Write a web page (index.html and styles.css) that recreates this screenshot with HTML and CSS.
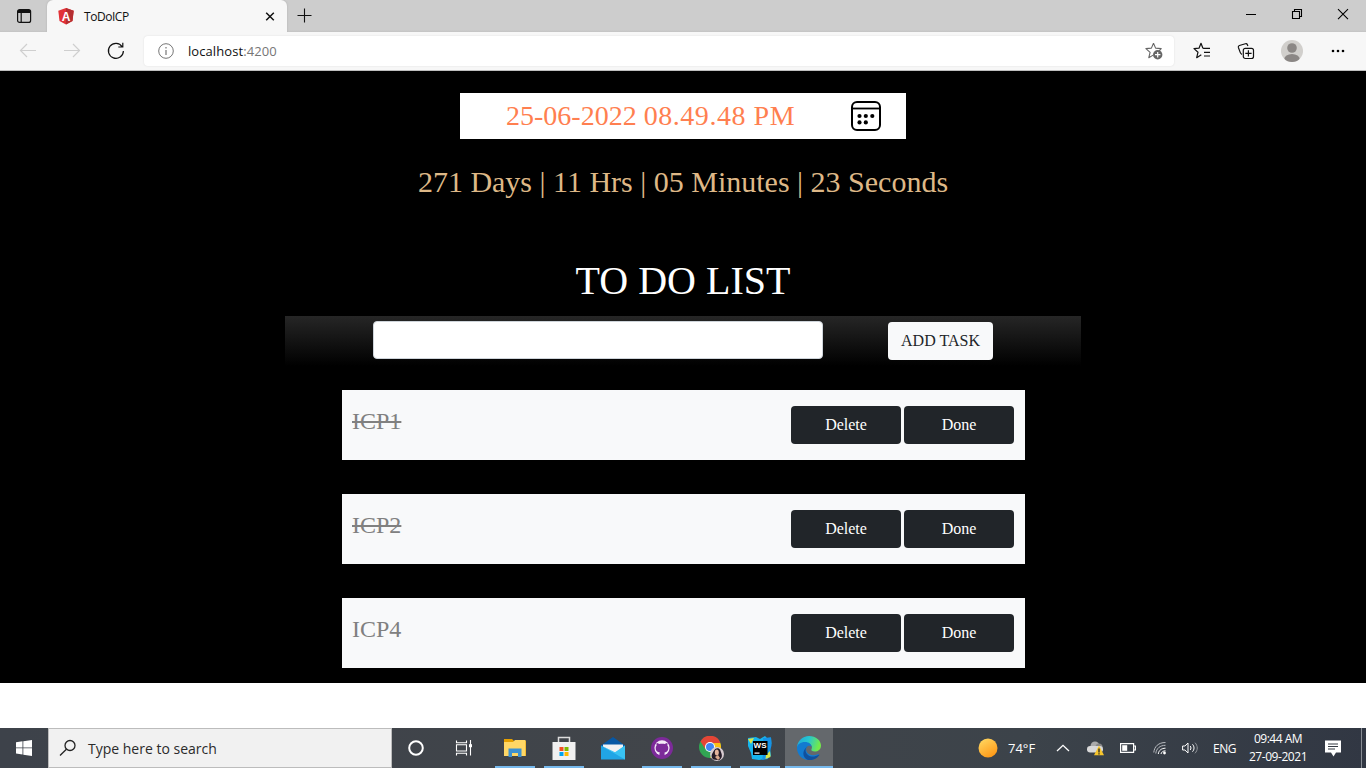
FILE: index.html
```html
<!DOCTYPE html>
<html lang="en">
<head>
<meta charset="utf-8">
<title>ToDoICP</title>
<link rel="stylesheet" href="styles.css">
</head>
<body>
<div class="screen">
  <header class="tabs">
    <div class="tab-menu">
      <svg width="16" height="16" viewBox="0 0 16 16" fill="none" stroke="#111" stroke-width="1.2"><rect x="1.6" y="1.6" width="13" height="12.8" rx="2"/><path d="M2 3.500h12.200" stroke-width="3"/><path d="M5.200 5v9"/></svg>
    </div>
    <div class="tab">
      <svg class="favicon" width="16" height="17" viewBox="0 0 16 17"><path d="M8 0l7.7 2.8-1.2 10.2L8 16.5 1.5 13 .3 2.8z" fill="#e23237"/><path d="M8 0l7.7 2.8-1.2 10.2L8 16.5z" fill="#b52e31"/><text x="8" y="12.5" text-anchor="middle" class="fav-letter">A</text></svg>
      <span class="tab-title">ToDoICP</span>
      <svg class="tab-close" width="10" height="10" viewBox="0 0 10 10" stroke="#111" stroke-width="1.5"><path d="M1.200 1.700l7.600 7.600M8.800 1.700L1.200 9.300"/></svg>
    </div>
    <svg class="new-tab" width="15" height="15" viewBox="0 0 15 15" stroke="#111" stroke-width="1.1"><path d="M7.5 .5v14M.5 7.5h14"/></svg>
    <div class="window-buttons">
      <svg width="46" height="28" viewBox="0 0 46 28" fill="none" stroke="#000"><path d="M18 14.5h10"/></svg>
      <svg width="46" height="28" viewBox="0 0 46 28" fill="none" stroke="#000" stroke-width="1.1"><path d="M18.5 11.5h7v7h-7zM20.5 11.5v-2h7v7h-2"/></svg>
      <svg width="46" height="28" viewBox="0 0 46 28" fill="none" stroke="#000" stroke-width="1.1"><path d="M18 9.200l10 10M28 9.200l-10 10"/></svg>
    </div>
  </header>
  <div class="toolbar">
    <svg class="nav" width="44" height="38" viewBox="0 0 44 38" fill="none" stroke="#cfcfcf" stroke-width="1.2"><path d="M36 18.500H20.500M27 12l-6.500 6.500 6.500 6.500"/></svg>
    <svg class="nav" width="44" height="38" viewBox="0 0 44 38" fill="none" stroke="#cfcfcf" stroke-width="1.2"><path d="M20 18.500h15.500M29 12l6.500 6.500-6.500 6.500"/></svg>
    <svg class="nav" width="56" height="38" viewBox="0 0 56 38" fill="none" stroke="#111" stroke-width="1.2"><path d="M34.200 14.800A7.500 7.500 0 1 0 35.400 19M34.800 10.700v4.300h-4.500"/></svg>
    <div class="address">
      <svg width="16" height="16" viewBox="0 0 16 16" fill="none" stroke="#767676"><circle cx="8" cy="8" r="7.300"/><path d="M8 7v5M8 4v1.400" stroke-width="1.200"/></svg>
      <span class="url">localhost<span class="port">:4200</span></span>
      <svg class="add-star" width="18" height="18" viewBox="0 0 18 18"><path d="M8.500 1.300l2.100 4.800 5.600.5-2 2.200M8.500 1.300L6.400 6.100.9 6.600l4.200 3.700-1.300 5.400 4.300-2.600" fill="none" stroke="#666" stroke-width="1.100" stroke-linejoin="round"/><circle cx="12.700" cy="12.700" r="4.700" fill="#666"/><path d="M12.700 10v5.400M10 12.700h5.400" stroke="#fff" stroke-width="1.200"/></svg>
    </div>
    <div class="actions">
      <svg width="18" height="18" viewBox="0 0 18 18" fill="none" stroke="#111" stroke-width="1.200" stroke-linejoin="round"><path d="M10.800 6.300L9.800 6 8 1.300 6 6.200 1 6.600l4 3.600-1.300 5.500 4.600-3M10 6.300h7M11 10.300h6M11 14h6"/></svg>
      <svg width="18" height="18" viewBox="0 0 18 18" fill="none" stroke="#111" stroke-width="1.200" stroke-linejoin="round"><rect x="6.300" y="6.300" width="10.200" height="10.200" rx="2"/><path d="M11.400 8.300v6.300M8.300 11.400h6.300M5 12.400c-1-.5-1.500-1-1.800-2L1.400 5.500c-.3-1 .1-1.700 1-2l6-1.800c1-.3 1.600 0 2 1l.5 1.300"/></svg>
      <svg width="22" height="22" viewBox="0 0 22 22"><clipPath id="avatar"><circle cx="11" cy="11" r="11"/></clipPath><g clip-path="url(#avatar)"><path fill="#d1cfcc" d="M0 0h22v22H0z"/><circle cx="11" cy="8" r="4.800" fill="#8b8785"/><ellipse cx="11" cy="19.500" rx="7.800" ry="5.500" fill="#8b8785"/></g></svg>
      <svg width="14" height="4" viewBox="0 0 14 4"><circle cx="2" cy="2" r="1.300"/><circle cx="7" cy="2" r="1.300"/><circle cx="12" cy="2" r="1.300"/></svg>
    </div>
  </div>
  <main class="page">
    <div class="date-field">
      <span class="date-text">25-06-2022 <span class="date-time">08.49.48 PM</span></span>
      <svg width="32" height="32" viewBox="0 0 32 32"><rect x="2" y="2" width="28" height="28" rx="5" fill="none" stroke="#000" stroke-width="2"/><path d="M2 8.500h28" stroke="#000" stroke-width="1.800"/><circle cx="9.500" cy="16" r="2.100"/><circle cx="15.800" cy="16" r="2.100"/><circle cx="22.300" cy="16" r="2.100"/><circle cx="9.500" cy="22.400" r="2.100"/><circle cx="15.800" cy="22.400" r="2.100"/></svg>
    </div>
    <p class="countdown">271 Days | 11 Hrs | 05 Minutes | 23 Seconds</p>
    <h1 class="title">TO DO LIST</h1>
    <form class="add-form">
      <input class="task-input" type="text">
      <button class="add-button" type="button">ADD TASK</button>
    </form>
    <section class="task"><span class="task-name done">ICP1</span><div class="task-buttons"><button type="button" class="btn">Delete</button><button type="button" class="btn">Done</button></div></section>
    <section class="task"><span class="task-name done">ICP2</span><div class="task-buttons"><button type="button" class="btn">Delete</button><button type="button" class="btn">Done</button></div></section>
    <section class="task"><span class="task-name">ICP4</span><div class="task-buttons"><button type="button" class="btn">Delete</button><button type="button" class="btn">Done</button></div></section>
  </main>
  <footer class="taskbar">
    <div class="start"><svg width="16" height="16" viewBox="0 0 16 16" fill="#fff"><path d="M0 2.200l6.500-.9v6.200H0zM7.300 1.200L16 0v7.500H7.300zM0 8.300h6.500v6.200L0 13.600zM7.300 8.300H16V16l-8.700-1.200z"/></svg></div>
    <div class="search">
      <svg width="18" height="18" viewBox="0 0 18 18" fill="none" stroke="#222" stroke-width="1.300"><circle cx="11" cy="6.500" r="5"/><path d="M7.400 10.200L1 16.500"/></svg>
      <span class="search-text">Type here to search</span>
    </div>
    <div class="tool"><svg width="16" height="16" viewBox="0 0 16 16" fill="none" stroke="#fff" stroke-width="2"><circle cx="8" cy="8" r="6.800"/></svg></div>
    <div class="tool"><svg width="18" height="18" viewBox="0 0 18 18" fill="none" stroke="#fff" stroke-width="1.100"><path d="M1.500 1.500v2.300h10V1.500M1.500 16.500v-2.300h10v2.300M1.500 5.800h10v6.200h-10zM15.500 1v15.500"/><path d="M14 5.200h3v3h-3z" fill="#fff" stroke="none"/></svg></div>
    <div class="apps">
      <div class="app open"><svg width="22" height="20" viewBox="0 0 22 20"><path d="M0 1h8l2 2h12v15H0z" fill="#e6a000"/><path d="M0 4h9l2-2h10.500v16H0z" fill="#ffd766"/><path d="M4.500 10.500h13V19h-3.500v-4H8v4H4.500z" fill="#3d91d1"/></svg></div>
      <div class="app open"><svg width="24" height="24" viewBox="0 0 24 24"><path d="M6.500 6V1.500h11V6" fill="none" stroke="#ddd" stroke-width="1.500"/><path d="M.5 6h23v18H.5z" fill="#f1f1f1"/><path d="M7.500 11h4v4h-4z" fill="#f25022"/><path d="M12.500 11h4v4h-4z" fill="#7fba00"/><path d="M7.500 16h4v4h-4z" fill="#00a4ef"/><path d="M12.500 16h4v4h-4z" fill="#ffb900"/></svg></div>
      <div class="app"><svg width="24" height="23" viewBox="0 0 24 23"><path d="M0 8.500L12 0l12 8.500V22H0z" fill="#0758a5"/><path d="M2 7.500h20V17H2z" fill="#f1f1f3"/><path d="M0 8.500L14 16 24 8.500V22.500H0z" fill="#21a5e5"/><path d="M0 8.500L24 22.500V8.500l-10 6.800z" fill="#39c3f3"/></svg></div>
      <div class="app open"><svg width="22" height="22" viewBox="0 0 22 22"><circle cx="11" cy="11" r="11" fill="#7c2a99"/><circle cx="11" cy="10.800" r="7.600" fill="#f4eaf7"/><path d="M8.400 19v-3.400c-2.500-.6-3.700-2-3.700-4.500 0-1.200.3-2 .9-2.700-.2-.8-.2-1.500.1-2.300 1 0 1.700.4 2.400.9 1.700-.5 4.100-.5 5.800 0 .7-.5 1.400-.9 2.400-.9.300.8.300 1.500.1 2.300.6.700.9 1.500.9 2.700 0 2.500-1.200 3.900-3.700 4.500V19z" fill="#7c2a99"/><path d="M8.500 15.800c-1.400.4-2-.2-2.600-1.200" fill="none" stroke="#f4eaf7"/></svg></div>
      <div class="app open"><svg width="25" height="25" viewBox="0 0 25 25"><circle cx="11" cy="11" r="11" fill="#31a553"/><path d="M1.500 5.500A11 11 0 0 1 21.500 7H11a5 5 0 0 0-4.700 6z" fill="#e44536"/><path d="M21.300 7A11 11 0 0 1 11 22l5-9-1.500-6z" fill="#fbc116"/><circle cx="11" cy="11" r="5" fill="#fff"/><circle cx="11" cy="11" r="4" fill="#4285f4"/><circle cx="18" cy="18" r="7" fill="#d6cbd0"/><path d="M14.500 23.500c-3.500-3-1.200-6 .2-8.500 1.200-3 5-4 6.500-1 1 3 3.800 7-1.200 10.300z" fill="#241b27"/><ellipse cx="17.800" cy="16.500" rx="2" ry="2.900" fill="#e4b49d"/><path d="M16 21l3-2 2 3-2 2z" fill="#dba98e"/></svg></div>
      <div class="app open"><svg width="24" height="24" viewBox="0 0 24 24"><path d="M0 2l8-1 4 2 5-3 2 2 4-.5.500 6L22 12l1 8-6 3-6 1-7-1-1-6-3-7z" fill="#16b5ed"/><path d="M15 2l8-.5.500 8L20 23l-6 1 2-10z" fill="#1593e8"/><path d="M0 3l6-1-3 6zM18 19l4-4 .5 6-5 2z" fill="#d8e84a"/><path d="M5 5h14.500v14H5z" fill="#000"/><path d="M6.500 16.500h5v1.200h-5z" fill="#fff"/><text x="5.600" y="12.400" class="ws">WS</text></svg></div>
      <div class="app open active"><svg width="24" height="24" viewBox="0 0 24 24"><defs><linearGradient id="edge" x1="0" y1="0" x2="1" y2=".25"><stop stop-color="#1fa5d8"/><stop offset=".5" stop-color="#25c6d0"/><stop offset="1" stop-color="#72e94b"/></linearGradient></defs><path d="M0 12C0 5 5.500 0 12 0c7 0 12 4.600 12 9.500 0 4-3.200 6-6.200 6-2.800 0-4-1-3.300-2.200C16.500 9 12 7 8.500 7 4 7 .5 10 0 12z" fill="url(#edge)"/><path d="M0 12c0-3.500 3.500-6 8-6 4 0 6.500 2.300 6.500 5-1.500-2-4-1.500-5 .5C7.500 16 13 21 20 18.500c1.500-.5 2.300-.8 1.800.2C19.500 22 16 24 12 24 5 24 0 18.500 0 12z" fill="#127bd0"/><path d="M10.300 10.200C7.500 13 8.500 17 11 19c3 2.400 7.500 1.500 10.500-.1 1-.6 1 .1.300.9C19 23.300 15 24.500 11 24c-5-1.800-7-8-.7-13.800z" fill="#10509d"/></svg></div>
    </div>
    <div class="tray">
      <svg class="sun" width="20" height="20" viewBox="0 0 20 20"><defs><linearGradient id="sun" x1=".1" y1="0" x2=".7" y2="1"><stop stop-color="#ffd963"/><stop offset="1" stop-color="#ff9815"/></linearGradient></defs><circle cx="10" cy="10" r="9.500" fill="url(#sun)"/></svg>
      <span class="temp">74°F</span>
      <svg class="chevron" width="14" height="8" viewBox="0 0 14 8" fill="none" stroke="#fff" stroke-width="1.300"><path d="M1 7l6-5.700L13 7"/></svg>
      <svg class="cloud" width="18" height="15" viewBox="0 0 18 15"><circle cx="8" cy="5" r="4.500" fill="#aaa"/><circle cx="12" cy="6" r="3.500" fill="#888"/><rect y="5" width="16" height="6.500" rx="3.200" fill="#d9d9d9"/><path d="M12 4.500l5 9.800H7z" fill="#f7c52c"/><path d="M12 7.500v4M12 12.300v1.200" stroke="#222" stroke-width="1.300"/></svg>
      <svg class="battery" width="16" height="10" viewBox="0 0 16 10"><path d="M.6.600h13v8.800H.6zM14 3h1.500v4H14" fill="none" stroke="#fff" stroke-width="1.200"/><path d="M2.200 2.200h5v5.600h-5z" fill="#fff"/></svg>
      <svg class="wifi" width="14" height="14" viewBox="0 0 14 14" fill="none" stroke="#fff"><g stroke="#b8bbc0"><path d="M.8 11.500C1.300 5.500 5.500 1.500 12.500 1.500"/><path d="M2.800 12.500C3.300 7.500 7 4.300 12.500 4.300"/></g><path d="M5.300 13C5.600 9.500 8.500 7.200 12.500 7.200M8 13c.3-1.800 2-3.200 4.500-3.200"/><circle cx="11.500" cy="12" r="1.400" fill="#fff" stroke="none"/></svg>
      <svg class="sound" width="17" height="14" viewBox="0 0 17 14" fill="none" stroke="#fff"><path d="M.6 5h2.300L6 2v10L2.900 9H.6zM8.200 5c1 1.200 1 2.800 0 4M10.500 3.300c2 2.200 2 5.200 0 7.400"/><path d="M13 1.700c3 3.200 3 7.400 0 10.600" stroke="#92969b"/></svg>
      <span class="lang">ENG</span>
      <div class="clock"><span class="time">09:44 AM</span><span class="day">27-09-2021</span></div>
      <svg class="notice" width="16" height="17" viewBox="0 0 16 17"><path d="M0 .500h16v12H11l-2.500 4-2.500-4H0z" fill="#fff"/><path d="M3 4h10M3 6.500h10M3 9h7" stroke="#343a43"/></svg>
      <span class="desktop-edge"></span>
    </div>
  </footer>
</div>
</body>
</html>
```
FILE: styles.css
```css
* { box-sizing: border-box; }
body { margin: 0; overflow: hidden; font-family: "Open Sans", "Noto Sans", sans-serif; }
svg { display: block; flex: none; }
button, input { font-family: "Liberation Serif", "Times New Roman", serif; margin: 0; }

.screen { width: 1366px; height: 768px; display: flex; flex-direction: column; background: #fff; white-space: nowrap; }

.tabs { height: 32px; display: flex; background: linear-gradient(#cdcdcd 30px, #c3c3c3); }
.tab-menu { width: 47px; padding: 8px 0 0 16px; }
.tab { width: 240px; display: flex; align-items: center; background: #f7f7f7; border-radius: 6px 6px 0 0; padding: 0 12px 0 11px; box-shadow: 0 0 2px #aaa; }
.fav-letter { font: bold 12px "Liberation Sans", sans-serif; fill: #fff; }
.tab-title { margin-left: 10px; font-size: 12px; color: #111; letter-spacing: -0.45px; }
.tab-close { margin-left: auto; }
.new-tab { margin: 8px 0 0 10px; }
.window-buttons { display: flex; margin-left: auto; height: 28px; }

.toolbar { height: 39px; display: flex; align-items: flex-start; background: #f7f7f7; border-bottom: 1px solid #bebebe; }
.address { width: 1030px; height: 30px; margin-top: 4px; padding: 0 11px 0 14px; display: flex; align-items: center; background: #fff; border-radius: 4px; box-shadow: 0 0 2px #ddd; }
.url { margin-left: 14px; font-size: 13px; color: #111; letter-spacing: 0.08px; }
.port { color: #767676; }
.add-star { margin-left: auto; }
.actions { flex: 1; height: 38px; display: flex; align-items: center; justify-content: space-between; padding: 0 21px 0 19px; }
.actions svg:nth-child(2), .actions svg:nth-child(3) { margin-left: -2px; }

.page { height: 612px; padding-top: 22px; display: flex; flex-direction: column; align-items: center; flex: none; background: #000; font-family: "Liberation Serif", "Times New Roman", serif; overflow: hidden; }
.date-field { width: 446px; height: 46px; display: flex; align-items: center; justify-content: space-between; padding: 0 24px 0 46px; background: #fff; flex: none; }
.date-text { font-size: 28px; line-height: 46px; color: #ff7f50; }
.date-time { letter-spacing: 0.55px; }
.countdown { margin: 23px 0 0; font-size: 30px; line-height: 40px; color: #deb887; }
.title { margin: 55px 0 0; font-size: 40px; line-height: 48px; font-weight: 400; color: #fff; }
.add-form { width: 796px; height: 50px; margin-top: 11px; flex: none; display: flex; align-items: flex-start; padding: 5px 88px 0; justify-content: space-between; background: linear-gradient(#262626, #000); }
.task-input { width: 450px; height: 38px; border: 1px solid #ced4da; border-radius: 4px; background: #fff; font-size: 16px; }
.add-button { width: 105px; height: 38px; margin-top: 1px; padding: 0; border: 0; border-radius: 4px; background: #f8f9fa; color: #212529; font-size: 16px; }
.task { width: 683px; height: 70px; flex: none; margin-top: 24px; margin-left: 1px; display: flex; justify-content: space-between; padding: 16px 11px 0 10px; background: #f8f9fa; }
.task + .task { margin-top: 34px; }
.task-name { font-size: 24px; line-height: 31px; height: 31px; color: #808080; }
.done { text-decoration: line-through; }
.task-buttons { display: flex; gap: 3px; }
.btn { width: 110px; height: 38px; padding: 0; border: 0; border-radius: 4px; background: #212529; color: #fff; font-size: 16px; }

.taskbar { height: 40px; margin-top: auto; display: flex; background: linear-gradient(90deg, #3d424a, #41454a 50%, #3c434a 75%, #313743); color: #fff; }
.start { width: 48px; display: flex; align-items: center; justify-content: center; }
.search { width: 344px; display: flex; align-items: center; padding-left: 10px; background: #f1f1f1; border: 1px solid #bcbcbc; }
.search-text { margin-left: 11px; font-size: 14px; color: #2b2b2b; }
.tool { width: 48px; display: flex; align-items: center; justify-content: center; }
.apps { display: flex; gap: 1px; margin-left: 3px; }
.app { width: 48px; display: flex; align-items: center; justify-content: center; border: solid transparent; border-width: 2px 4px; background-clip: padding-box; }
.open { width: 40px; margin: 0 4px; border-width: 2px 0; border-bottom-color: #76b9ed; }
.active { width: 48px; margin: 0; background: #64686c; background-clip: border-box; }
.ws { font: bold 8px "Liberation Sans", sans-serif; fill: #fff; }
.tray { display: flex; align-items: center; margin-left: auto; font-size: 12px; }
.temp { width: 29px; margin-left: 10px; font-size: 13px; letter-spacing: 0; }
.chevron { margin-left: 19px; }
.cloud { margin-left: 17px; }
.battery { margin-left: 15px; }
.wifi { margin-left: 17px; }
.sound { margin-left: 15px; }
.lang { width: 25px; margin-left: 14px; letter-spacing: -0.5px; }
.clock { width: 60px; margin-left: 10px; display: flex; flex-direction: column; align-items: center; line-height: 18px; }
.time { letter-spacing: -0.5px; }
.day { letter-spacing: -0.45px; }
.notice { margin-left: 17px; }
.desktop-edge { width: 5px; height: 40px; margin-left: 20px; border-left: 1px solid #888d94; }
```
